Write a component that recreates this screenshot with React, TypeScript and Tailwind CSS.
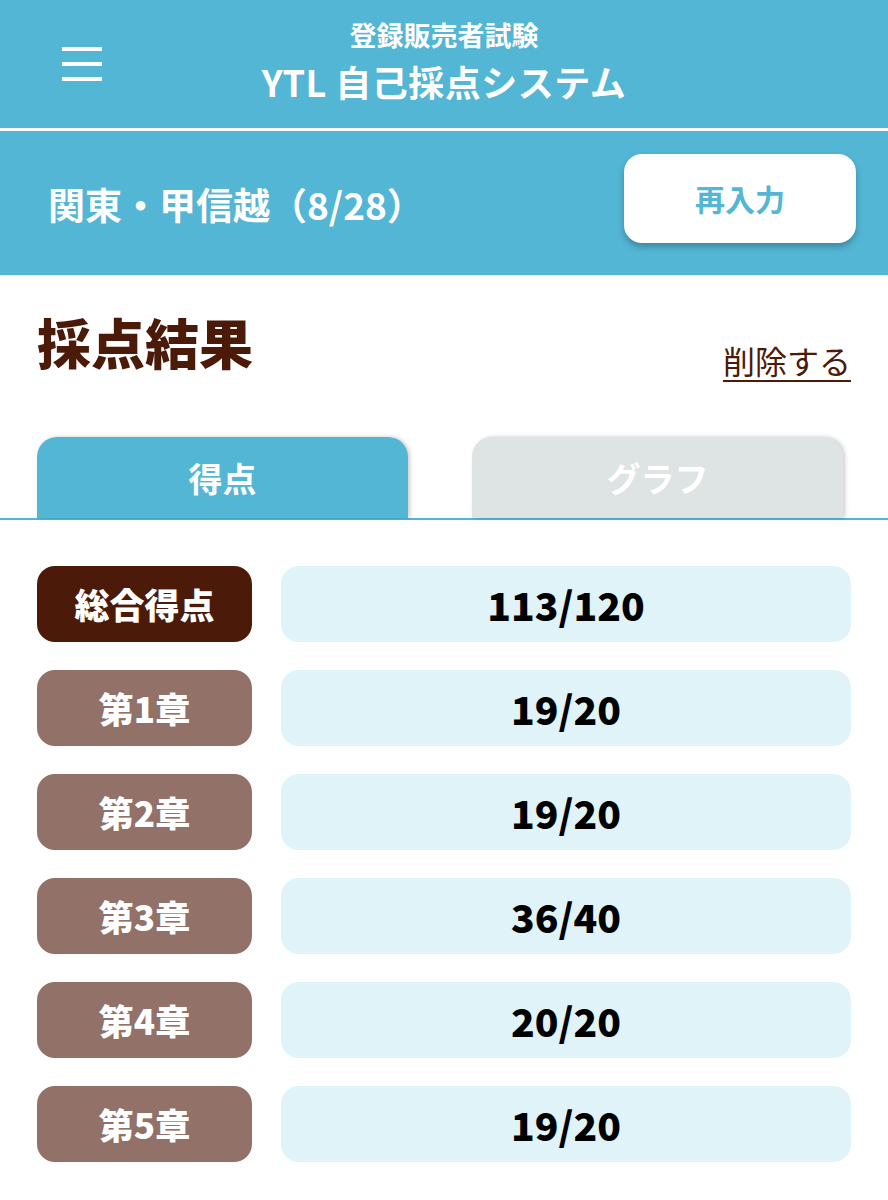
const font = "font-['Noto_Sans_CJK_JP','Noto_Sans',sans-serif]";

const scores = [
  { label: "総合得点", value: "113/120", total: true },
  { label: "第1章", value: "19/20" },
  { label: "第2章", value: "19/20" },
  { label: "第3章", value: "36/40" },
  { label: "第4章", value: "20/20" },
  { label: "第5章", value: "19/20" },
];

export default function App() {
  return (
    <div className={`min-h-[1200px] w-[888px] bg-white ${font}`}>
      {/* ヘッダー */}
      <header className="bg-[#53b6d5] text-white">
        <div className="grid h-[128px] grid-cols-[1fr_auto_1fr]">
          <div className="flex items-center pl-[62px]">
            <div className="flex w-[40px] flex-col gap-[11px]">
              <span className="h-[4px] bg-white" />
              <span className="h-[4px] bg-white" />
              <span className="h-[4px] bg-white" />
            </div>
          </div>
          <div className="flex flex-col items-center pt-[19px]">
            <div className="text-[27px] font-bold leading-[32px]">登録販売者試験</div>
            <div className="mt-[8px] text-[36px] font-bold leading-[44px] tracking-[0.5px]">YTL 自己採点システム</div>
          </div>
          <div />
        </div>
        <div className="h-[3px] bg-white" />
        <div className="flex h-[144px] justify-between pl-[48px] pr-[32px]">
          <div className="self-center pt-[4px] text-[37px] font-bold">関東・甲信越（8/28）</div>
          <button className="mt-[23px] flex h-[89px] w-[232px] items-center justify-center rounded-[18px] bg-white text-[30px] font-bold text-[#53b6d5] shadow-[0_4px_6px_rgba(0,0,0,0.25)]">
            再入力
          </button>
        </div>
      </header>

      {/* 採点結果 */}
      <div className="flex items-end justify-between px-[37px] pt-[35px]">
        <h1 className="text-[54px] font-black leading-[64px] text-[#4b1a08]">採点結果</h1>
        <a className="mb-[-6px] text-[32px] leading-[40px] text-[#4b1a08] underline decoration-2 underline-offset-[6px]">
          削除する
        </a>
      </div>

      {/* タブ */}
      <div className="mt-[63px] flex gap-[64px] border-b-2 border-[#53b6d5] px-[37px]">
        <div className="flex h-[81px] w-[371px] items-center justify-center rounded-t-[20px] bg-[#53b6d5] text-[34px] font-bold text-white shadow-[2px_0_4px_rgba(0,0,0,0.2)]">
          得点
        </div>
        <div className="flex h-[81px] w-[371px] items-center justify-center rounded-t-[20px] bg-[#dee3e4] text-[34px] font-bold text-white shadow-[2px_0_4px_rgba(0,0,0,0.2)]">
          グラフ
        </div>
      </div>

      {/* 得点一覧 */}
      <div className="flex flex-col gap-[28px] px-[37px] pt-[46px]">
        {scores.map((s) => (
          <div key={s.label} className="flex gap-[29px]">
            <div
              className={`flex h-[76px] w-[215px] items-center justify-center rounded-[18px] text-[35px] font-black text-white ${
                s.total ? "bg-[#4b1a08]" : "bg-[#927168]"
              }`}
            >
              {s.label}
            </div>
            <div className="flex h-[76px] flex-1 items-center justify-center rounded-[18px] bg-[#dff3f8] text-[39px] font-black text-black">
              {s.value}
            </div>
          </div>
        ))}
      </div>
    </div>
  );
}
